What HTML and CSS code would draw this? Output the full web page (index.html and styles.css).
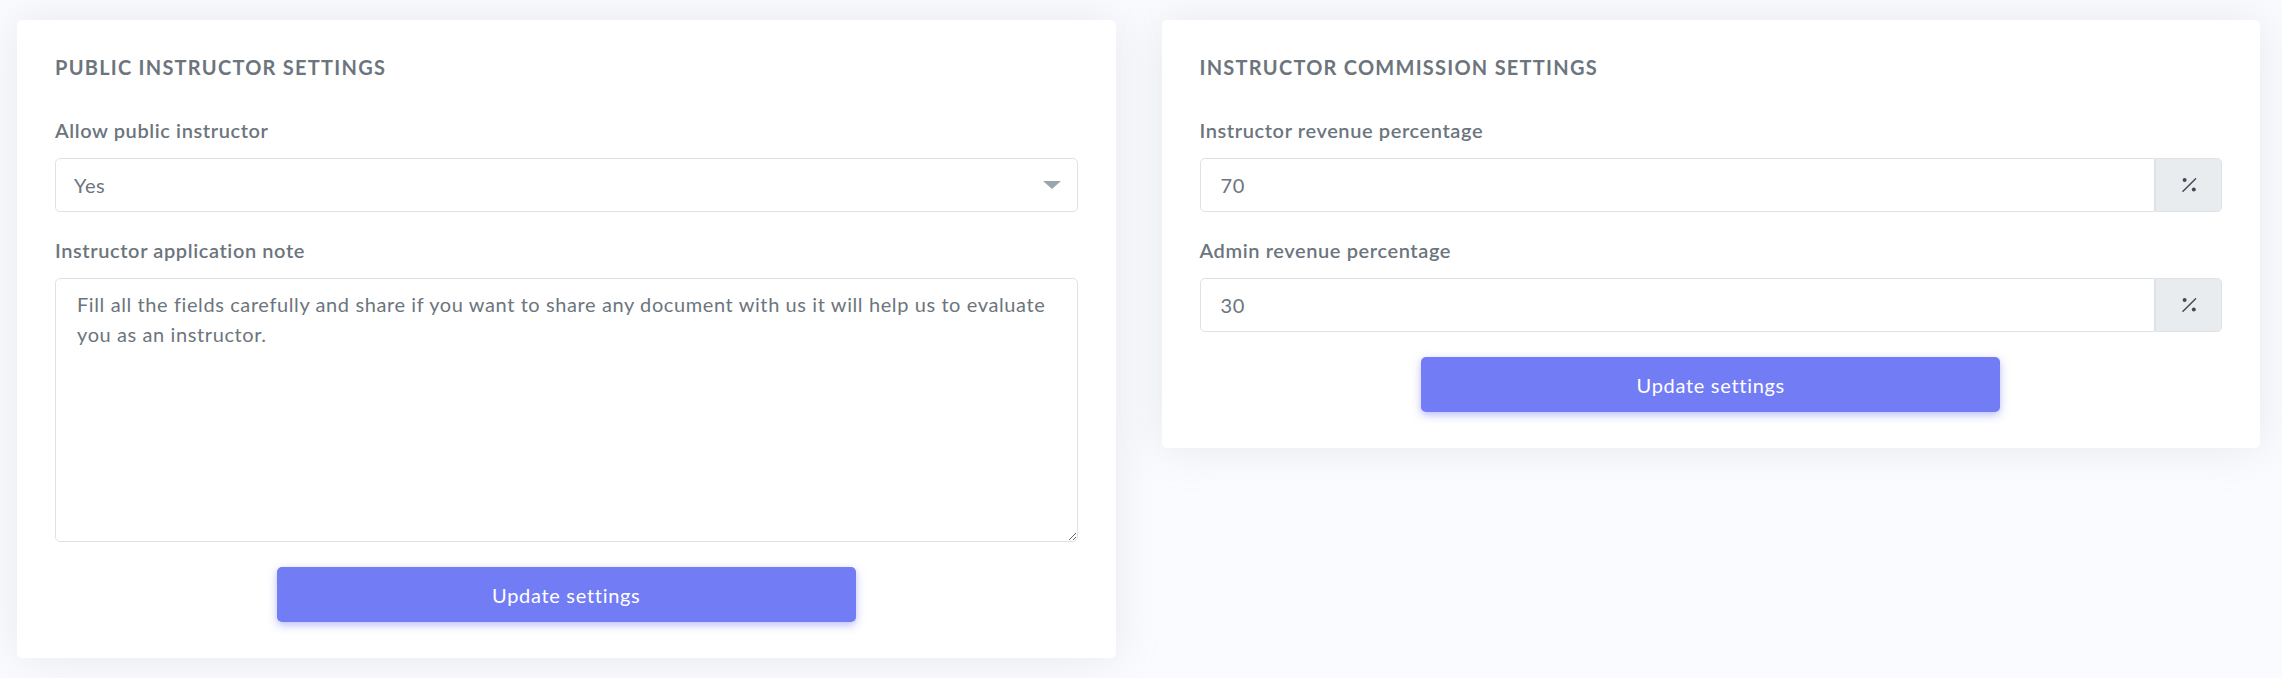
FILE: index.html
```html
<!DOCTYPE html>
<html lang="en">
<head>
<meta charset="utf-8">
<title>Instructor settings</title>
<link rel="stylesheet" href="styles.css">
</head>
<body>
<div class="page">
  <section class="card">
    <h4 class="header-title">Public instructor settings</h4>
    <div class="form-group">
      <label class="form-label" for="allow">Allow public instructor</label>
      <div class="select-wrap">
        <select id="allow" class="form-control select">
          <option>Yes</option>
          <option>No</option>
        </select>
      </div>
    </div>
    <div class="form-group">
      <label class="form-label" for="note">Instructor application note</label>
      <textarea id="note" class="form-control textarea">Fill all the fields carefully and share if you want to share any document with us it will help us to evaluate you as an instructor.</textarea>
    </div>
    <button class="btn" type="button">Update settings</button>
  </section>

  <section class="card">
    <h4 class="header-title">Instructor commission settings</h4>
    <div class="form-group">
      <label class="form-label" for="inst">Instructor revenue percentage</label>
      <div class="input-group">
        <input id="inst" class="form-control group-input" type="text" value="70">
        <span class="addon">
          <svg width="16" height="16" viewBox="0 0 16 16" aria-hidden="true">
            <line x1="2" y1="14.2" x2="14.6" y2="1.8" stroke="#424a55" stroke-width="1.5" stroke-linecap="round"/>
            <circle cx="3.6" cy="2.9" r="2" fill="#424a55"/>
            <circle cx="12.8" cy="12.6" r="2" fill="#424a55"/>
          </svg>
        </span>
      </div>
    </div>
    <div class="form-group">
      <label class="form-label" for="admin">Admin revenue percentage</label>
      <div class="input-group">
        <input id="admin" class="form-control group-input" type="text" value="30">
        <span class="addon">
          <svg width="16" height="16" viewBox="0 0 16 16" aria-hidden="true">
            <line x1="2" y1="14.2" x2="14.6" y2="1.8" stroke="#424a55" stroke-width="1.5" stroke-linecap="round"/>
            <circle cx="3.6" cy="2.9" r="2" fill="#424a55"/>
            <circle cx="12.8" cy="12.6" r="2" fill="#424a55"/>
          </svg>
        </span>
      </div>
    </div>
    <button class="btn" type="button">Update settings</button>
  </section>
</div>
</body>
</html>
```

FILE: styles.css
```css
* { box-sizing: border-box; }

html, body {
  margin: 0;
  padding: 0;
  background: #fafbfe;
  font-family: "Lato", "Noto Sans", sans-serif;
  color: #6c757d;
}

.page {
  display: grid;
  grid-template-columns: 1fr 1fr;
  column-gap: 46px;
  align-items: start;
  padding: 20px 22px 0 17px;
  height: 678px;
  overflow: hidden;
}

.card {
  background: #fff;
  border-radius: 5px;
  box-shadow: 0 0 45px 0 rgba(154, 161, 171, 0.2);
  padding: 35px 38px 36px 38px;
  display: flex;
  flex-direction: column;
}

.header-title {
  margin: 0 0 39px 0;
  font-size: 20px;
  line-height: 24px;
  font-weight: 700;
  text-transform: uppercase;
  letter-spacing: 1.25px;
  color: #6c757d;
}

.form-group {
  display: flex;
  flex-direction: column;
  margin-bottom: 26px;
}

.form-group:last-of-type {
  margin-bottom: 25px;
}

.form-label {
  font-size: 20px;
  line-height: 24px;
  font-weight: 600;
  letter-spacing: 0.6px;
  margin-bottom: 16px;
  color: #6c757d;
}

.form-control {
  font-family: inherit;
  font-size: 20px;
  line-height: 30px;
  letter-spacing: 0.6px;
  color: #6c757d;
  background: #fff;
  border: 1.5px solid #dee2e6;
  border-radius: 5px;
  outline: none;
  margin: 0;
}

.select-wrap {
  position: relative;
}

.select-wrap::after {
  content: "";
  position: absolute;
  right: 17px;
  top: 23px;
  width: 0;
  height: 0;
  border-left: 9px solid transparent;
  border-right: 9px solid transparent;
  border-top: 8px solid #98a6ad;
  pointer-events: none;
}

.select {
  width: 100%;
  height: 54px;
  padding: 0 50px 0 18px;
  -webkit-appearance: none;
  appearance: none;
}

.textarea {
  width: 100%;
  height: 264px;
  padding: 10px 20px 10px 21px;
  resize: vertical;
}

.input-group {
  display: flex;
  height: 54px;
}

.group-input {
  flex: 1;
  min-width: 0;
  height: 54px;
  padding: 0 20px;
  border-radius: 5px 0 0 5px;
}

.addon {
  width: 67px;
  height: 54px;
  display: flex;
  align-items: center;
  justify-content: center;
  background: #e9ecef;
  border: 1.5px solid #dee2e6;
  border-left-width: 1px;
  border-radius: 0 5px 5px 0;
}

.btn {
  align-self: center;
  width: 579px;
  height: 55px;
  border: none;
  border-radius: 5px;
  background: #727cf5;
  color: #fff;
  font-family: inherit;
  font-size: 20px;
  font-weight: 400;
  letter-spacing: 0.7px;
  box-shadow: 0 3px 8px 0 rgba(114, 124, 245, 0.5);
  cursor: pointer;
}
```
